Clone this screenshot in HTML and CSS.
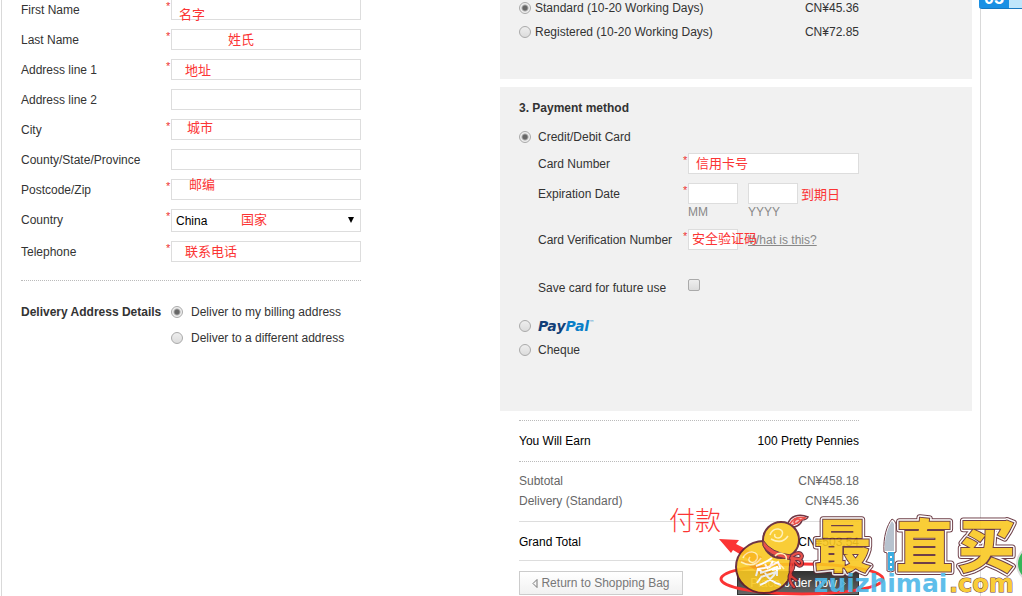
FILE: index.html
```html
<!DOCTYPE html>
<html lang="en">
<head>
  <meta charset="UTF-8" />
  <title>Checkout</title>
  <link rel="stylesheet" href="styles.css">
</head>
<body>

<div class="page">

  <form class="billing">
    <div class="row">
      <label for="fname">First Name</label><span class="req">*</span>
      <input type="text" id="fname" class="text">
    </div>
    <div class="row">
      <label for="lname">Last Name</label><span class="req">*</span>
      <input type="text" id="lname" class="text">
    </div>
    <div class="row">
      <label for="addr1">Address line 1</label><span class="req">*</span>
      <input type="text" id="addr1" class="text">
    </div>
    <div class="row">
      <label for="addr2">Address line 2</label><span class="req"></span>
      <input type="text" id="addr2" class="text">
    </div>
    <div class="row">
      <label for="city">City</label><span class="req">*</span>
      <input type="text" id="city" class="text">
    </div>
    <div class="row">
      <label for="county">County/State/Province</label><span class="req"></span>
      <input type="text" id="county" class="text">
    </div>
    <div class="row">
      <label for="zip">Postcode/Zip</label><span class="req">*</span>
      <input type="text" id="zip" class="text">
    </div>
    <div class="row row-select">
      <label for="country">Country</label><span class="req">*</span>
      <span class="select-box">
        <select id="country"><option>China</option></select>
      </span>
    </div>
    <div class="row">
      <label for="tel">Telephone</label><span class="req">*</span>
      <input type="text" id="tel" class="text">
    </div>

    <div class="delivery">
      <strong>Delivery Address Details</strong>
      <div class="delivery-options">
        <label><input type="radio" name="deliver" checked> Deliver to my billing address</label>
        <label><input type="radio" name="deliver"> Deliver to a different address</label>
      </div>
    </div>
  </form>

  <form class="checkout">
    <div class="panel shipping">
      <div class="ship-row">
        <label><input type="radio" name="ship" checked> Standard (10-20 Working Days)</label>
        <span>CN¥45.36</span>
      </div>
      <div class="ship-row">
        <label><input type="radio" name="ship"> Registered (10-20 Working Days)</label>
        <span>CN¥72.85</span>
      </div>
    </div>

    <div class="panel payment">
      <h2>3. Payment method</h2>
      <label class="method"><input type="radio" name="pay" checked> Credit/Debit Card</label>

      <div class="card">
        <div class="card-row">
          <label for="cardno">Card Number</label><span class="req">*</span>
          <input type="text" id="cardno" class="text">
        </div>
        <div class="card-row expiry">
          <label for="month">Expiration Date</label><span class="req">*</span>
          <div class="date">
            <input type="text" id="month" class="text short">
            <label for="month">MM</label>
          </div>
          <div class="date">
            <input type="text" id="year" class="text short">
            <label for="year">YYYY</label>
          </div>
        </div>
        <div class="card-row cvn">
          <label for="cvn">Card Verification Number</label><span class="req">*</span>
          <input type="text" id="cvn" class="text short">
          <a href="#">What is this?</a>
        </div>
        <div class="card-row save">
          <label for="save">Save card for future use</label><span class="req"></span>
          <input type="checkbox" id="save">
        </div>
      </div>

      <label class="method paypal"><input type="radio" name="pay">
        <span class="paypal-logo"><b>Pay</b><i>Pal</i><sup>™</sup></span>
      </label>
      <label class="method"><input type="radio" name="pay"> Cheque</label>
    </div>

    <div class="summary">
      <div class="line earn"><span>You Will Earn</span><span>100 Pretty Pennies</span></div>
      <div class="costs">
        <div class="line"><span>Subtotal</span><span>CN¥458.18</span></div>
        <div class="line"><span>Delivery (Standard)</span><span>CN¥45.36</span></div>
      </div>
      <div class="line total"><span>Grand Total</span><span>CN¥503.54</span></div>
      <div class="buttons">
        <button type="button" class="btn-return">
          <svg width="6" height="9" viewBox="0 0 6 9"><path d="M5 0.500v8L1 4.500z"/></svg>
          Return to Shopping Bag
        </button>
        <button type="button" class="btn-order">
          Place order now
          <svg width="6" height="9" viewBox="0 0 6 9"><path d="M1 0.500v8l4-4z"/></svg>
        </button>
      </div>
    </div>
  </form>

</div>

<!-- translations written over the form -->
<span class="note n-fname">名字</span>
<span class="note n-lname">姓氏</span>
<span class="note n-addr">地址</span>
<span class="note n-city">城市</span>
<span class="note n-zip">邮编</span>
<span class="note n-country">国家</span>
<span class="note n-tel">联系电话</span>
<span class="note n-card">信用卡号</span>
<span class="note n-date">到期日</span>
<span class="note n-cvn">安全验证码</span>
<span class="note n-pay">付款</span>

<div class="badge"><b>05</b></div>

<!-- circle and arrow round the order button -->
<svg class="marker" width="170" height="69" viewBox="718 527 170 69">
  <ellipse cx="802" cy="579" rx="81" ry="15" fill="none" stroke="#fb3434" stroke-width="3"/>
  <path d="M719 539l20 1-3 4 26 13-4 8-25-15-2 3z" fill="#fb3434"/>
</svg>

<svg class="watermark" width="292" height="86" viewBox="730 510 292 86">
  <circle cx="1035" cy="564" r="19" fill="#ddd"/>
  <circle cx="1035" cy="564" r="17" fill="#35b558"/>
  <g opacity=".9">
    <g class="wm-outer"><text x="814" y="567">最</text><text x="896" y="567">直</text><text x="958" y="567">买</text></g>
    <g class="wm-white"><text x="814" y="567">最</text><text x="896" y="567">直</text><text x="958" y="567">买</text></g>
    <g class="wm-fill"><text x="814" y="567">最</text><text x="896" y="567">直</text><text x="958" y="567">买</text></g>
    <!-- knife -->
    <path d="M892 519c-5 6-9 18-8 33l3 1v18q4 2 7 0v-18l2-1v-28q-1-4-4-5z" fill="#fff" stroke="#5f2b35" stroke-width="1"/>
    <path d="M892 521c-4 6-8 17-7 30h9v-27z" fill="#b0bcc9"/>
    <path d="M888 552h6v18q-3 2-6 0z" fill="#28a5de"/>
    <path d="M891 556v2m0 3v2m0 3v2" stroke="#fff" stroke-width="2"/>
    <!-- gourd -->
    <g stroke="#5f2030" stroke-width="2" fill="#f9c822">
      <path d="M788 524c2-8 11-11 20-7-1 2-3 3-6 3-1 5-7 8-12 7l-3 3z" fill="#fff" stroke-width="1.500"/>
      <path d="M790 524c3-6 9-8 16-6-5 0-9 7-14 7m2-2c0-4 5-5 6-3 0 3-4 4-6 3" fill="#f8b5b0" stroke="#e83e36" stroke-width="1.500"/>
      <ellipse cx="764" cy="567" rx="28" ry="26"/>
      <circle cx="781" cy="540" r="18"/>
    </g>
    <path d="M738 560q20 1 34 12l-8 6q-12-12-26-18z" fill="#f3a81d"/>
    <path d="M763 540q8 13 28 15l4 3q-4 3-8 1-18-3-24-13z" fill="#e83e36" stroke="#5f2030" stroke-width="1"/>
    <g fill="none" stroke-linecap="round">
      <path d="M792 556q8-6 10 0-1 5-10 2m1 0q10 1 9 6-2 4-6-1l-4-5q-2 12-1 18l5 4m-5-22q5 7 0 14-4 8 3 15" stroke="#5f2030" stroke-width="4"/>
      <path d="M792 556q8-6 10 0-1 5-10 2m1 0q10 1 9 6-2 4-6-1l-4-5q-2 12-1 18l5 4m-5-22q5 7 0 14-4 8 3 15" stroke="#e83e36" stroke-width="2"/>
    </g>
    <g fill="none" stroke="#fff0b0" stroke-width="1.500">
      <path d="M770 535c3-9 15-7 12 0-2 5-9 3-7-1m-4 5q11 6 17-3M743 558c4-9 17-7 14 1-3 6-11 3-7-2m-9 5q13 7 20-4M775 556c4-5 13-2 11 4m-19 1q11-1 17 8"/>
    </g>
    <!-- character painted on the gourd -->
    <path d="M756 566q9-3 16-8m-14 11l4 3m3-8l3 5m5-8l-4 7m-13 8l2-7q11-1 20-7l2 5m-20 6q9-2 16-6m-15 10l15-5q-4 8-16 13m5-12q4 8 16 12m-4-19v10m-5-6l9-2m-19 8l-5 7" fill="none" stroke="#fff" stroke-width="2"/>
    <text class="wm-url" x="814" y="592">zuizhimai</text>
    <text class="wm-com" x="949" y="592">.com</text>
  </g>
</svg>

</body>
</html>
```
FILE: styles.css
```css
* {
  box-sizing: border-box;
}
body {
  margin: 0;
  position: relative;
  min-height: 100vh;
  overflow: hidden;
  background: white;
  color: #333;
  font: 12px/16px "Liberation Sans", Arial, sans-serif;
}
.page {
  display: flex;
  justify-content: space-between;
  align-items: flex-start;
  max-width: 980px;
  height: 100vh;
  margin-left: 1px;
  padding: 0 8px 0 19px;
  border: 1px solid #d9d9d9;
  border-width: 0 1px;
}

/* form controls */
input, select, button {
  margin: 0;
  font: inherit;
}
.text {
  flex: 1;
  min-width: 0;
  height: 21px;
  padding: 0 4px;
  border: 1px solid #ddd;
  background: white;
}
.text.short {
  flex: none;
  width: 50px;
}
input[type=radio], input[type=checkbox] {
  appearance: none;
  flex: none;
  width: 12px;
  height: 12px;
  border: 1px solid #aaa;
  border-radius: 50%;
  background: linear-gradient(#eee, #dcdcdc);
}
input[type=checkbox] {
  margin-top: 2px;
  border-radius: 2px;
}
input[type=radio]:checked {
  background: radial-gradient(circle, #666 0 2px, #eee 4px);
}
.req {
  width: 5px;
  color: #e33;
  font-size: 11px;
  line-height: 14px;
}

/* billing address */
.billing {
  width: 340px;
  margin-top: -1px;
}
.row {
  display: flex;
  height: 21px;
  margin-bottom: 9px;
}
.row > label {
  width: 145px;
  padding-top: 3px;
}
.row-select {
  height: 23px;
}
.select-box {
  position: relative;
  flex: 1;
}
.select-box select {
  appearance: none;
  width: 100%;
  height: 23px;
  padding: 0 4px;
  border: 1px solid #ddd;
  border-radius: 0;
  background: white;
  color: black;
}
.select-box:after {
  content: "";
  position: absolute;
  right: 7px;
  top: 8px;
  border: 3px solid transparent;
  border-top: 6px solid black;
  border-bottom: 0;
}
.delivery {
  display: flex;
  margin-top: 18px;
  padding-top: 23px;
  border-top: 1px dotted #bbb;
}
.delivery strong {
  width: 150px;
}
.delivery-options {
  display: grid;
  gap: 10px;
}
.delivery-options label {
  display: flex;
  align-items: center;
  gap: 8px;
}

/* right column */
.checkout {
  width: 472px;
}
.panel {
  padding-left: 19px;
  background: #f1f1f1;
}
.shipping {
  height: 79px;
  margin-bottom: 8px;
}
.ship-row {
  display: flex;
  justify-content: space-between;
  width: 340px;
  height: 24px;
}
.ship-row label {
  display: flex;
  align-items: center;
  gap: 4px;
  height: 16px;
}
.payment {
  height: 324px;
  padding-top: 13px;
}
.payment h2 {
  margin: 0 0 13px;
  font-size: 12px;
  line-height: 16px;
}
.method {
  display: flex;
  align-items: center;
  gap: 7px;
  height: 16px;
}
.card {
  width: 340px;
  padding: 8px 0 25px 19px;
}
.card-row {
  display: flex;
  height: 21px;
  margin-bottom: 9px;
}
.card-row > label {
  width: 145px;
  padding-top: 3px;
}
.expiry {
  height: 37px;
}
.date {
  width: 60px;
}
.date label {
  display: block;
  color: #888;
}
.cvn a {
  margin-left: 10px;
  padding-top: 3px;
  color: #888;
}
.cvn {
  margin-bottom: 27px;
}
.save {
  height: 16px;
  margin-bottom: 0;
}
.paypal {
  margin-bottom: 8px;
}
.paypal-logo {
  display: flex;
  color: #123f78;
  font: italic bold 14px/16px "DejaVu Sans", sans-serif;
}
.paypal-logo i {
  color: #0a7fc8;
}
.paypal-logo sup {
  color: #0a7fc8;
  font-size: 5px;
  font-weight: normal;
  line-height: 8px;
}

/* order summary */
.summary {
  width: 340px;
  margin: 9px 0 0 19px;
}
.line {
  display: flex;
  justify-content: space-between;
  line-height: 20px;
}
.earn {
  padding: 10px 0;
  border: 1px dotted #bbb;
  border-width: 1px 0;
  color: black;
}
.costs {
  padding: 9px 0 10px;
  color: #666;
}
.total {
  padding: 10px 0 8px;
  border: 1px solid #ddd;
  border-width: 1px 0;
  color: black;
}
.buttons {
  display: flex;
  justify-content: space-between;
  margin-top: 10px;
}
.buttons button {
  display: flex;
  align-items: center;
  justify-content: center;
  gap: 3px;
  height: 24px;
  padding: 0 11px;
}
.buttons path {
  fill: none;
  stroke: currentColor;
}
.btn-return {
  width: 164px;
  border: 1px solid #ccc;
  background: linear-gradient(white, #f1f1f1);
  color: #777;
}
.btn-order {
  width: 122px;
  border: 1px solid #333;
  background: linear-gradient(#333, #666);
  color: white;
}

/* red notes */
.note {
  position: absolute;
  color: #fb3434;
  font: 13px/16px "Noto Sans CJK SC", sans-serif;
  white-space: nowrap;
}
.n-fname { left: 179px; top: 6px; }
.n-lname { left: 228px; top: 31px; }
.n-addr { left: 185px; top: 62px; }
.n-city { left: 187px; top: 119px; }
.n-zip { left: 189px; top: 176px; }
.n-country { left: 241px; top: 211px; }
.n-tel { left: 185px; top: 243px; }
.n-card { left: 696px; top: 155px; }
.n-date { left: 801px; top: 186px; }
.n-cvn { left: 692px; top: 230px; }
.n-pay {
  left: 669px;
  top: 503px;
  font-size: 26px;
  font-weight: 300;
  line-height: 32px;
}

.badge {
  position: absolute;
  right: 0;
  top: 0;
  width: 43px;
  height: 9px;
  overflow: hidden;
  border-bottom: 1px solid #1878c0;
  border-radius: 0 0 0 3px;
  background: linear-gradient(90deg, #1a90e4 30px, #bfe6fb 30px);
}
.badge b {
  position: absolute;
  left: 5px;
  bottom: 3px;
  color: white;
  font-size: 18px;
  line-height: 14px;
}
.marker {
  position: absolute;
  left: 718px;
  top: 527px;
}
.watermark {
  position: absolute;
  left: 730px;
  top: 510px;
}
.watermark text {
  font-family: "Noto Sans CJK SC", sans-serif;
  font-size: 57px;
  font-weight: 900;
}
.wm-outer {
  fill: #5f2b35;
  stroke: #5f2b35;
  stroke-width: 7px;
  stroke-linejoin: round;
}
.wm-white {
  fill: white;
  stroke: white;
  stroke-width: 5px;
  stroke-linejoin: round;
}
.wm-fill {
  fill: #f9c822;
  stroke: #5f2b35;
  stroke-width: 2px;
  paint-order: stroke;
}
.watermark .wm-url {
  fill: #4db8e8;
  font-family: "DejaVu Sans", sans-serif;
  font-size: 25px;
  font-weight: bold;
}
.watermark .wm-com {
  fill: #f9c822;
  stroke: #5f2b35;
  stroke-width: 1px;
  paint-order: stroke;
  font-family: "DejaVu Sans", sans-serif;
  font-size: 24px;
  font-weight: bold;
}
```
